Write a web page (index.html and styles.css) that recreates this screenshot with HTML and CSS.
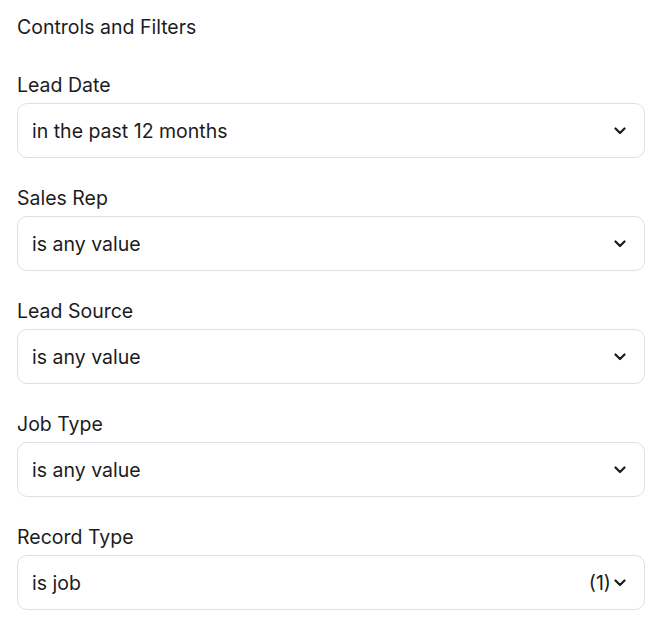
FILE: index.html
```html
<!DOCTYPE html>
<html lang="en">

<head>
    <meta charset="UTF-8">
    <title>Controls and Filters</title>
    <meta name="viewport" content="width=device-width, initial-scale=1.0">
    <link rel="stylesheet" href="styles.css">
</head>

<body>
    <div class="filters-panel">
        <h2 class="panel-title">Controls and Filters</h2>

        <div class="filter-group">
            <div class="filter-label">Lead Date</div>
            <div class="filter-select">
                <span class="filter-value">in the past 12 months</span>
                <svg class="chevron" viewBox="0 0 12 8" width="12" height="8"><path d="M1.5 1.5 L6 6 L10.5 1.5" /></svg>
            </div>
        </div>

        <div class="filter-group">
            <div class="filter-label">Sales Rep</div>
            <div class="filter-select">
                <span class="filter-value">is any value</span>
                <svg class="chevron" viewBox="0 0 12 8" width="12" height="8"><path d="M1.5 1.5 L6 6 L10.5 1.5" /></svg>
            </div>
        </div>

        <div class="filter-group">
            <div class="filter-label">Lead Source</div>
            <div class="filter-select">
                <span class="filter-value">is any value</span>
                <svg class="chevron" viewBox="0 0 12 8" width="12" height="8"><path d="M1.5 1.5 L6 6 L10.5 1.5" /></svg>
            </div>
        </div>

        <div class="filter-group">
            <div class="filter-label">Job Type</div>
            <div class="filter-select">
                <span class="filter-value">is any value</span>
                <svg class="chevron" viewBox="0 0 12 8" width="12" height="8"><path d="M1.5 1.5 L6 6 L10.5 1.5" /></svg>
            </div>
        </div>

        <div class="filter-group">
            <div class="filter-label">Record Type</div>
            <div class="filter-select">
                <span class="filter-value">is job</span>
                <span class="filter-count">(1)</span>
                <svg class="chevron chevron-tight" viewBox="0 0 12 8" width="12" height="8"><path d="M1.5 1.5 L6 6 L10.5 1.5" /></svg>
            </div>
        </div>
    </div>
</body>

</html>
```

FILE: styles.css
```css
body {
    margin: 0;
    padding: 0;
    font-family: Inter, 'Noto Sans', sans-serif;
    background-color: #fff;
    color: #1c1c1e;
}

.filters-panel {
    padding: 15px 25px 20px 17px;
    display: flex;
    flex-direction: column;
}

.panel-title {
    margin: 0 0 34px 0;
    font-size: 19.5px;
    line-height: 24px;
    font-weight: 400;
}

.filter-group {
    margin-bottom: 28px;
}

.filter-label {
    font-size: 19.5px;
    line-height: 24px;
    margin-bottom: 6px;
}

.filter-select {
    height: 55px;
    box-sizing: border-box;
    border: 1px solid #dcdfe6;
    border-radius: 10px;
    padding: 0 18px 0 14px;
    display: flex;
    align-items: center;
    font-size: 19.5px;
}

.filter-value {
    flex: 1;
}

.filter-count {
    margin-right: 3px;
}

.chevron {
    fill: none;
    stroke: #1c1c1e;
    stroke-width: 2.2;
    stroke-linecap: round;
    stroke-linejoin: round;
    margin-left: 8px;
}

.chevron-tight {
    margin-left: 0;
}
```
